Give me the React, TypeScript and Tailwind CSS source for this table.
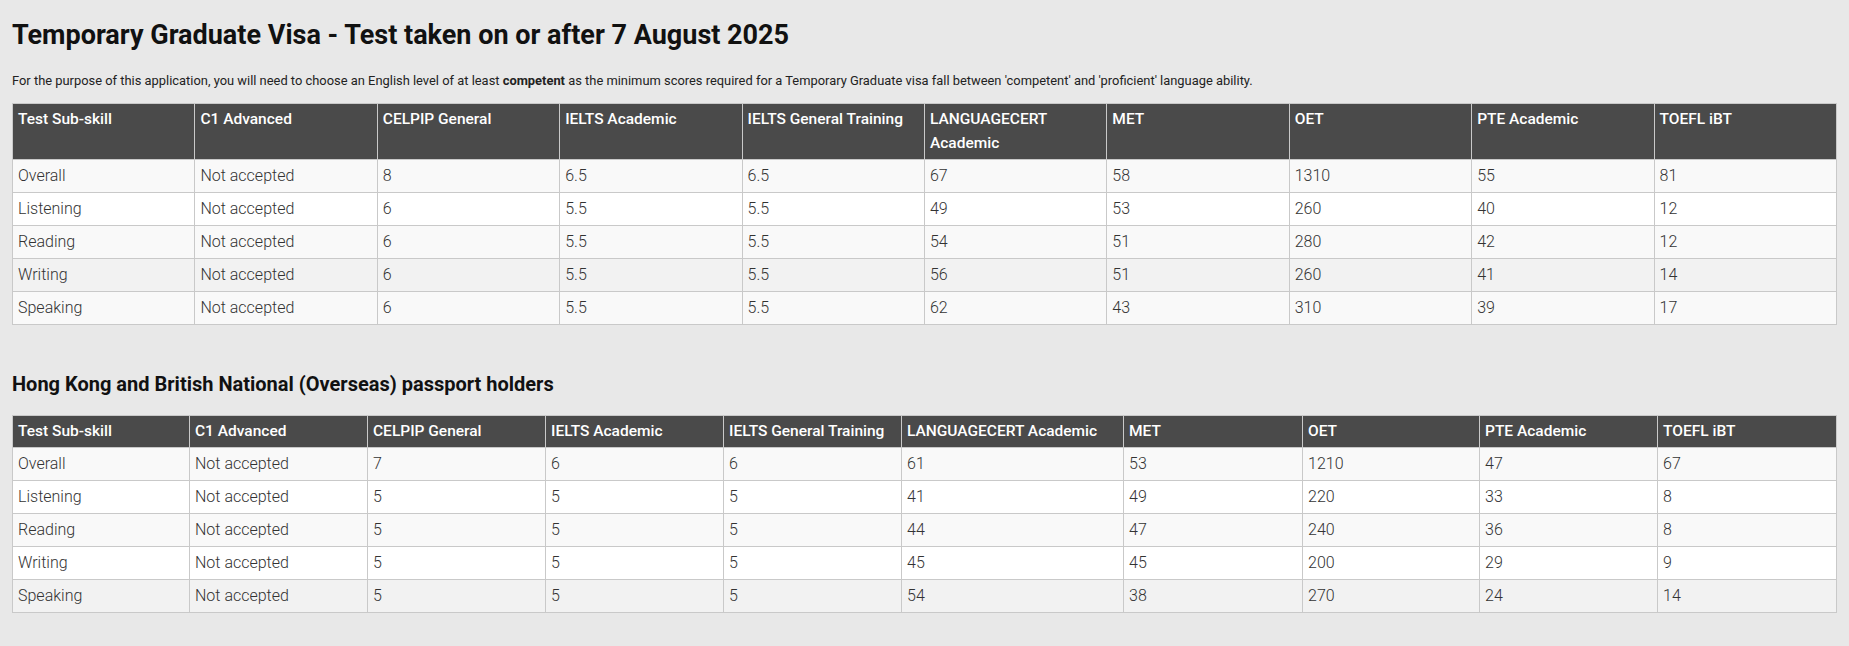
import React from "react";

const tests = [
	"Test Sub-skill",
	"C1 Advanced",
	"CELPIP General",
	"IELTS Academic",
	"IELTS General Training",
	"LANGUAGECERT Academic",
	"MET",
	"OET",
	"PTE Academic",
	"TOEFL iBT",
];

const standardRows = [
	["Overall", "Not accepted", "8", "6.5", "6.5", "67", "58", "1310", "55", "81"],
	["Listening", "Not accepted", "6", "5.5", "5.5", "49", "53", "260", "40", "12"],
	["Reading", "Not accepted", "6", "5.5", "5.5", "54", "51", "280", "42", "12"],
	["Writing", "Not accepted", "6", "5.5", "5.5", "56", "51", "260", "41", "14"],
	["Speaking", "Not accepted", "6", "5.5", "5.5", "62", "43", "310", "39", "17"],
];

const hkRows = [
	["Overall", "Not accepted", "7", "6", "6", "61", "53", "1210", "47", "67"],
	["Listening", "Not accepted", "5", "5", "5", "41", "49", "220", "33", "8"],
	["Reading", "Not accepted", "5", "5", "5", "44", "47", "240", "36", "8"],
	["Writing", "Not accepted", "5", "5", "5", "45", "45", "200", "29", "9"],
	["Speaking", "Not accepted", "5", "5", "5", "54", "38", "270", "24", "14"],
];

// row backgrounds as they appear in the screenshot
const standardBg = ["bg-[#f9f9f9]", "bg-white", "bg-[#f9f9f9]", "bg-[#f2f2f2]", "bg-[#f9f9f9]"];
const hkBg = ["bg-[#f9f9f9]", "bg-white", "bg-[#f9f9f9]", "bg-white", "bg-[#f2f2f2]"];

const hkWidths = [
	"w-[177px]",
	"w-[178px]",
	"w-[178px]",
	"w-[178px]",
	"w-[178px]",
	"w-[222px]",
	"w-[179px]",
	"w-[177px]",
	"w-[178px]",
	"w-[179px]",
];

const ScoreTable = ({
	rows,
	bgs,
	widths,
}: {
	rows: string[][];
	bgs: string[];
	widths?: string[];
}) => {
	return (
		<table className={`w-full border-collapse text-[16px] leading-6 ${widths ? "" : "table-fixed"}`}>
			{widths && (
				<colgroup>
					{widths.map((w, i) => (
						<col key={i} className={w} />
					))}
				</colgroup>
			)}
			<thead>
				<tr className="bg-[#4a4a4a] text-white">
					{tests.map((t) => (
						<th
							key={t}
							className="border border-[#c9c9c9] px-[5px] pt-[3px] pb-[4px] text-left align-top text-[15.5px] font-medium"
						>
							{t}
						</th>
					))}
				</tr>
			</thead>
			<tbody>
				{rows.map((r, i) => (
					<tr key={r[0]} className={`${bgs[i]} text-[#333]`}>
						{r.map((c, j) => (
							<td key={j} className="border border-[#c9c9c9] px-[5px] py-1 font-light">
								{c}
							</td>
						))}
					</tr>
				))}
			</tbody>
		</table>
	);
};

const App = () => {
	return (
		<div className="min-h-[646px] bg-[#e8e8e8] px-3 pt-[16px] text-black font-['Roboto',sans-serif]">
			<h1 className="text-[27px] font-bold leading-[38px] text-[#111]">
				Temporary Graduate Visa - Test taken on or after 7 August 2025
			</h1>
			<p className="mt-[18px] text-[12.9px] leading-[18px] text-[#222]">
				For the purpose of this application, you will need to choose an English level of at least{" "}
				<strong className="font-bold">competent</strong> as the minimum scores required for a Temporary
				Graduate visa fall between 'competent' and 'proficient' language ability.
			</p>
			<div className="mt-[13px]">
				<ScoreTable rows={standardRows} bgs={standardBg} />
			</div>
			<h2 className="mt-[45px] text-[20px] font-bold leading-7 text-[#111]">
				Hong Kong and British National (Overseas) passport holders
			</h2>
			<div className="mt-[17px]">
				<ScoreTable rows={hkRows} bgs={hkBg} widths={hkWidths} />
			</div>
		</div>
	);
};

export default App;
